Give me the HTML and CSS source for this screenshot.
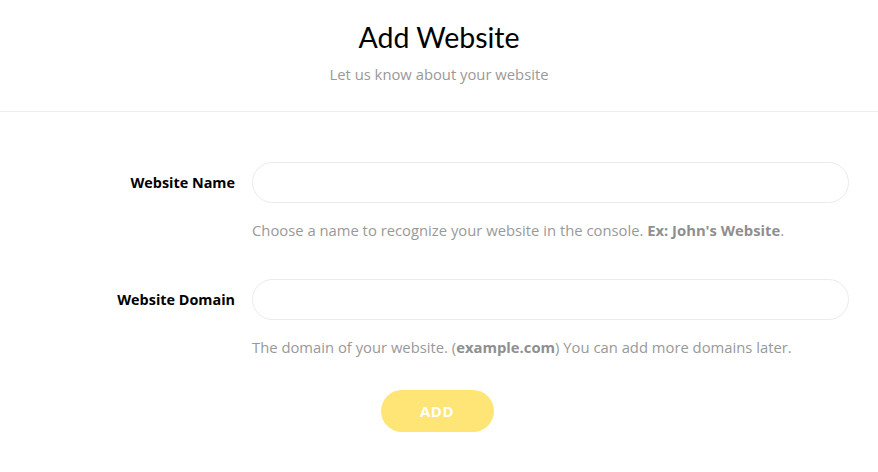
FILE: index.html
```html
<!DOCTYPE html>
<html>
<head>
<meta charset="utf-8">
<link rel="stylesheet" href="styles.css">
</head>
<body>
<header class="header">
  <h1 class="title">Add Website</h1>
  <p class="subtitle">Let us know about your website</p>
</header>
<main class="form">
  <div class="row">
    <label class="label">Website Name</label>
    <div class="field">
      <input class="input" type="text">
      <p class="help">Choose a name to recognize your website in the console. <b>Ex: John's Website</b>.</p>
    </div>
  </div>
  <div class="row">
    <label class="label">Website Domain</label>
    <div class="field">
      <input class="input" type="text">
      <p class="help">The domain of your website. (<b>example.com</b>) You can add more domains later.</p>
    </div>
  </div>
  <div class="actions">
    <button class="btn">ADD</button>
  </div>
</main>
</body>
</html>
```
FILE: styles.css
```css
* { box-sizing: border-box; }
body {
  margin: 0;
  font-family: "Open Sans", "Lato", sans-serif;
  background: #fff;
  color: #000;
}
.header {
  text-align: center;
  border-bottom: 1px solid #ececec;
  padding: 18px 0 22px;
  height: 112px;
}
.title {
  margin: 0;
  font-family: "Lato", sans-serif;
  font-weight: 400;
  font-size: 28.5px;
  line-height: 38px;
}
.subtitle {
  margin: 8px 0 0;
  font-size: 14.8px;
  color: #999;
  line-height: 20px;
}
.form {
  padding-top: 50px;
}
.row {
  display: grid;
  grid-template-columns: 235px 597px;
  column-gap: 17px;
  margin-bottom: 39px;
}
.label {
  text-align: right;
  font-weight: 700;
  font-size: 14.4px;
  height: 42px;
  line-height: 42px;
}
.input {
  display: block;
  width: 597px;
  height: 41px;
  border: 1px solid #ebebeb;
  border-radius: 21px;
  outline: none;
  padding: 0 18px;
  font: inherit;
}
.help {
  margin: 17px 0 0;
  font-size: 14.8px;
  line-height: 20px;
  color: #999;
}
.help b { color: #8f8f8f; }
.actions {
  display: flex;
  justify-content: center;
  margin-top: -6px;
  padding-right: 4px;
}
.btn {
  width: 113px;
  height: 42px;
  border: none;
  border-radius: 21px;
  background: #ffe476;
  color: #fff;
  font: inherit;
  font-weight: 700;
  font-size: 15px;
  letter-spacing: 0.5px;
}
```
